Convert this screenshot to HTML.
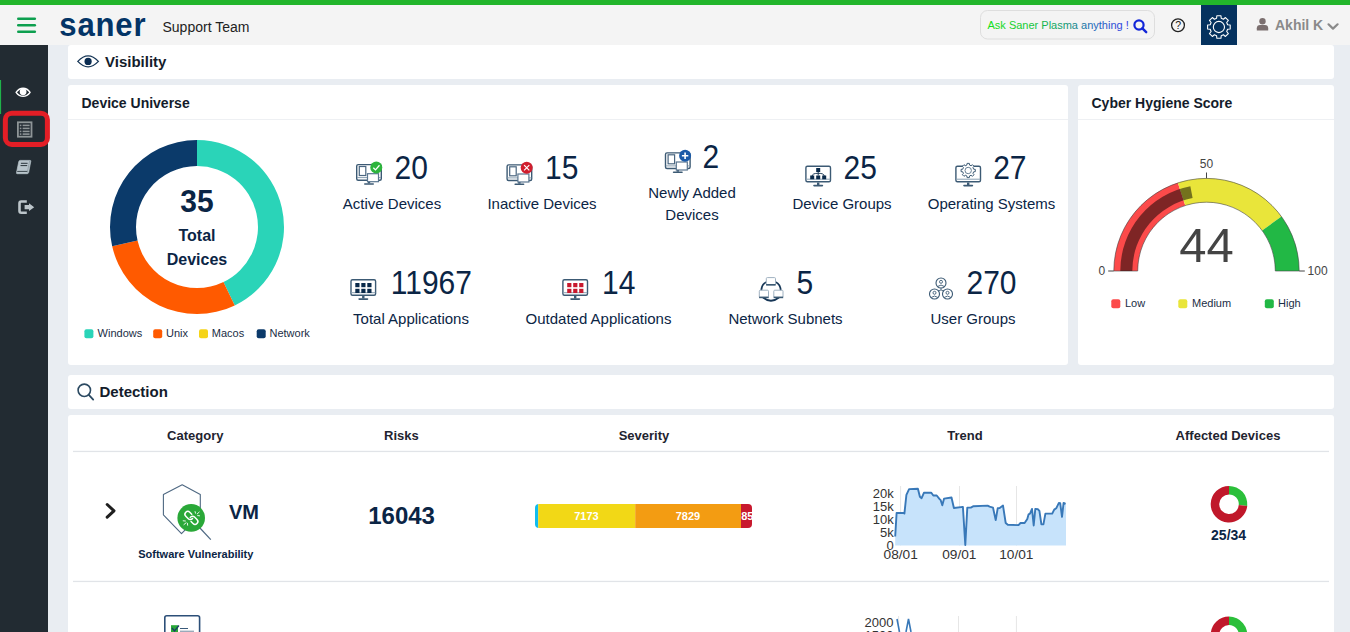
<!DOCTYPE html>
<html><head><meta charset="utf-8"><title>Saner Dashboard</title>
<style>html,body{margin:0;padding:0;width:1350px;height:632px;overflow:hidden;background:#e9edf2;font-family:"Liberation Sans",sans-serif}svg{display:block;position:absolute;left:0;top:0}</style>
</head><body>
<svg width="1350" height="632" viewBox="0 0 1350 632" font-family="'Liberation Sans', sans-serif"><rect x="0" y="0" width="1350" height="632" fill="#e9edf2"/>
<rect x="0" y="0" width="1350" height="5" fill="#22b52b"/>
<rect x="0" y="5" width="1350" height="40" fill="#f4f4f4"/>
<rect x="0" y="45" width="48" height="587" fill="#222b32"/>
<line x1="18.3" y1="18.7" x2="34.8" y2="18.7" stroke="#0d9f4f" stroke-width="2.6" stroke-linecap="round"/>
<line x1="18.3" y1="25.3" x2="34.8" y2="25.3" stroke="#0d9f4f" stroke-width="2.6" stroke-linecap="round"/>
<line x1="18.3" y1="31.8" x2="34.8" y2="31.8" stroke="#0d9f4f" stroke-width="2.6" stroke-linecap="round"/>
<text transform="translate(59.3,36) scale(0.915,1)" font-size="34" font-weight="bold" fill="#033466" letter-spacing="0.9">saner</text>
<text x="162.5" y="32.2" font-size="14" font-weight="normal" fill="#222" text-anchor="start" >Support Team</text>
<defs><linearGradient id="askg" x1="987" y1="0" x2="1128" y2="0" gradientUnits="userSpaceOnUse"><stop offset="0" stop-color="#14e01e"/><stop offset="0.3" stop-color="#12c83a"/><stop offset="0.55" stop-color="#139a70"/><stop offset="0.72" stop-color="#1a70b0"/><stop offset="1" stop-color="#2a3ee6"/></linearGradient></defs>
<rect x="980.5" y="10.5" width="174" height="28.5" rx="7" fill="#f4f4f4" stroke="#dedede" stroke-width="1"/>
<text x="987.5" y="29" font-size="11" font-weight="normal" fill="url(#askg)" text-anchor="start" >Ask Saner Plasma anything !</text>
<circle cx="1139" cy="25" r="4.6" fill="none" stroke="#1226d8" stroke-width="2.2"/>
<line x1="1142.4" y1="28.4" x2="1146.2" y2="32.2" stroke="#1226d8" stroke-width="2.4" stroke-linecap="round"/>
<circle cx="1178" cy="25.3" r="6.4" fill="none" stroke="#222" stroke-width="1.3"/>
<text x="1178.1" y="29.1" font-size="10.5" font-weight="normal" fill="#222" text-anchor="middle" >?</text>
<rect x="1201" y="5" width="36" height="40" fill="#05325f"/>
<path d="M1216.58,18.30 L1216.83,15.69 L1220.97,15.69 L1221.22,18.30 L1223.41,19.21 L1225.44,17.54 L1228.36,20.46 L1226.69,22.49 L1227.60,24.68 L1230.21,24.93 L1230.21,29.07 L1227.60,29.32 L1226.69,31.51 L1228.36,33.54 L1225.44,36.46 L1223.41,34.79 L1221.22,35.70 L1220.97,38.31 L1216.83,38.31 L1216.58,35.70 L1214.39,34.79 L1212.36,36.46 L1209.44,33.54 L1211.11,31.51 L1210.20,29.32 L1207.59,29.07 L1207.59,24.93 L1210.20,24.68 L1211.11,22.49 L1209.44,20.46 L1212.36,17.54 L1214.39,19.21Z" fill="none" stroke="#fff" stroke-width="1.1" stroke-linejoin="round"/>
<circle cx="1218.9" cy="27" r="5.6" fill="none" stroke="#fff" stroke-width="1.1"/>
<circle cx="1262.5" cy="21.3" r="3.2" fill="#7b6f6f"/>
<path d="M1256.8,30.4 L1256.8,28.2 Q1257,25 1260,25 L1265,25 Q1268,25 1268.2,28.2 L1268.2,30.4 Z" fill="#7b6f6f"/>
<text x="1275" y="30" font-size="14" font-weight="bold" fill="#8a8a8a" text-anchor="start" >Akhil K</text>
<polyline points="1328.5,24.3 1333,28.6 1337.6,24.3" fill="none" stroke="#8a8a8a" stroke-width="2.2" stroke-linecap="round" stroke-linejoin="round"/>
<rect x="0" y="80" width="1.1" height="34" fill="#1fb24a"/>
<path d="M16.1,92.3 Q19,88.2 23.1,88.2 Q27.2,88.2 30.1,92.3 Q27.2,96.3 23.1,96.3 Q19,96.3 16.1,92.3Z" fill="none" stroke="#fff" stroke-width="1.4" stroke-linejoin="round"/>
<circle cx="23.1" cy="91.7" r="3.4" fill="#fff"/>
<rect x="5.35" y="113.2" width="42.05" height="31.3" rx="6.5" fill="none" stroke="#e41e26" stroke-width="5"/>
<rect x="17.9" y="122.3" width="13.6" height="14.4" fill="none" stroke="#8e9597" stroke-width="1.8"/>
<rect x="19.8" y="124.6" width="1.6" height="1.6" fill="#8e9597"/><rect x="22.6" y="124.6" width="7" height="1.6" fill="#8e9597"/>
<rect x="19.8" y="127.60000000000001" width="1.6" height="1.6" fill="#8e9597"/><rect x="22.6" y="127.60000000000001" width="7" height="1.6" fill="#8e9597"/>
<rect x="19.8" y="130.60000000000002" width="1.6" height="1.6" fill="#8e9597"/><rect x="22.6" y="130.60000000000002" width="7" height="1.6" fill="#8e9597"/>
<rect x="19.8" y="133.3" width="1.6" height="1.6" fill="#8e9597"/><rect x="22.6" y="133.3" width="7" height="1.6" fill="#8e9597"/>
<path d="M20.2,160.4 L30.2,160.4 Q31,160.4 30.8,161.3 L28.6,172.6 Q28.3,173.7 27.2,173.7 L17.3,173.7 Q16.3,173.7 16.5,172.7 L18.8,161.6 Q19.1,160.4 20.2,160.4 Z" fill="#b9c5cc" stroke="#b9c5cc" stroke-width="0.7" stroke-linejoin="round"/>
<path d="M20.9,163.3 L27.6,163.3 M20.5,165.6 L27.2,165.6" stroke="#2a343b" stroke-width="1"/>
<path d="M17.2,171.4 L27.9,171.4" stroke="#2a343b" stroke-width="0.9"/>
<path d="M29.6,161 L27.3,172.5" stroke="#8d9aa2" stroke-width="0.8"/>
<path d="M26.8,201.5 L21.2,201.5 Q19.5,201.5 19.5,203.2 L19.5,211.1 Q19.5,212.8 21.2,212.8 L26.8,212.8" fill="none" stroke="#bcc5ca" stroke-width="2.6"/>
<path d="M24.6,205.1 L29,205.1 L29,203.2 L34.2,207.2 L29,211.1 L29,209.3 L24.6,209.3Z" fill="#bcc5ca"/>
<rect x="68" y="45" width="1266" height="34" rx="3" fill="#fff"/>
<rect x="68" y="85" width="1000" height="280" rx="3" fill="#fff"/>
<rect x="1078" y="85" width="256" height="280" rx="3" fill="#fff"/>
<rect x="68" y="375" width="1266" height="34" rx="3" fill="#fff"/>
<rect x="68" y="415" width="1266" height="240" rx="3" fill="#fff"/>
<rect x="68" y="119" width="1000" height="1" fill="#eef0f3"/>
<rect x="1078" y="119" width="256" height="1" fill="#eef0f3"/>
<path d="M77.8,61.4 Q88.1,50.5 98.4,61.4 Q88.1,72.3 77.8,61.4Z" fill="none" stroke="#163656" stroke-width="1.3"/>
<circle cx="88.1" cy="61.4" r="3.6" fill="#0b2d52"/>
<text x="105" y="67" font-size="15" font-weight="bold" fill="#141c2b" text-anchor="start" >Visibility</text>
<text x="81.5" y="107.6" font-size="14" font-weight="bold" fill="#141c2b" text-anchor="start" >Device Universe</text>
<text x="1091.5" y="108" font-size="14" font-weight="bold" fill="#141c2b" text-anchor="start" >Cyber Hygiene Score</text>
<path d="M197.00,140.00 A87,87 0 0 1 234.74,305.39 L223.46,281.96 A61,61 0 0 0 197.00,166.00 Z" fill="#2ad4b8"/>
<path d="M234.74,305.39 A87,87 0 0 1 112.18,246.36 L137.53,240.58 A61,61 0 0 0 223.46,281.96 Z" fill="#ff5a00"/>
<path d="M112.18,246.36 A87,87 0 0 1 197.00,140.00 L197.00,166.00 A61,61 0 0 0 137.53,240.58 Z" fill="#0b3a6a"/>
<text transform="translate(197,211.6) scale(1,1.035)" x="0" y="0" font-size="30" font-weight="bold" fill="#0b2545" text-anchor="middle" >35</text>
<text x="197" y="241" font-size="16" font-weight="bold" fill="#0b2545" text-anchor="middle" >Total</text>
<text x="197" y="264.6" font-size="16" font-weight="bold" fill="#0b2545" text-anchor="middle" >Devices</text>
<rect x="84.4" y="329.3" width="9" height="9" rx="2" fill="#2ad4b8"/>
<text x="97.6" y="336.8" font-size="11" font-weight="normal" fill="#1a2d45" text-anchor="start" >Windows</text>
<rect x="153.2" y="329.3" width="9" height="9" rx="2" fill="#ff5a00"/>
<text x="166" y="336.8" font-size="11" font-weight="normal" fill="#1a2d45" text-anchor="start" >Unix</text>
<rect x="199" y="329.3" width="9" height="9" rx="2" fill="#f5d418"/>
<text x="211.8" y="336.8" font-size="11" font-weight="normal" fill="#1a2d45" text-anchor="start" >Macos</text>
<rect x="256.7" y="329.3" width="9" height="9" rx="2" fill="#0b3a6a"/>
<text x="269.5" y="336.8" font-size="11" font-weight="normal" fill="#1a2d45" text-anchor="start" >Network</text>
<rect x="356.7" y="164.59999999999997" width="24.6" height="15.6" rx="1.5" fill="#fff" stroke="#3c5a74" stroke-width="1.4"/><line x1="357" y1="177.59999999999997" x2="381" y2="177.59999999999997" stroke="#8aa0b2" stroke-width="1"/><rect x="367.8" y="180.89999999999998" width="2.4" height="2.5" fill="#3c5a74"/><rect x="364.0" y="183.2" width="10" height="1.6" rx="0.8" fill="#3c5a74"/><rect x="359.3" y="166.5" width="6.5" height="9" fill="#fff" stroke="#4a6680" stroke-width="1.2"/><rect x="367.5" y="173.7" width="11" height="8" fill="#fff" stroke="#5a7690" stroke-width="1.2"/><circle cx="376.3" cy="167.5" r="6" fill="#2db43c"/><polyline points="373.3,167.7 375.5,169.9 379.5,165.3" fill="none" stroke="#fff" stroke-width="1.3"/>
<text transform="translate(394.5,178.8) scale(1,1.1)" x="0" y="0" font-size="30" font-weight="normal" fill="#0b2545" text-anchor="start" >20</text>
<text x="392" y="209.4" font-size="15" font-weight="normal" fill="#0b2545" text-anchor="middle" >Active Devices</text>
<rect x="507.09999999999997" y="164.89999999999998" width="24.6" height="15.6" rx="1.5" fill="#fff" stroke="#3c5a74" stroke-width="1.4"/><line x1="507.4" y1="177.89999999999998" x2="531.4" y2="177.89999999999998" stroke="#8aa0b2" stroke-width="1"/><rect x="518.1999999999999" y="181.2" width="2.4" height="2.5" fill="#3c5a74"/><rect x="514.4" y="183.5" width="10" height="1.6" rx="0.8" fill="#3c5a74"/><rect x="509.7" y="166.8" width="6.5" height="9" fill="#fff" stroke="#4a6680" stroke-width="1.2"/><rect x="517.9" y="174.0" width="11" height="8" fill="#fff" stroke="#5a7690" stroke-width="1.2"/><circle cx="526.6999999999999" cy="167.8" r="6" fill="#d01e2e"/><path d="M524.0999999999999,165.20000000000002 L529.3,170.4 M529.3,165.20000000000002 L524.0999999999999,170.4" stroke="#fff" stroke-width="1.2"/>
<text transform="translate(545,178.8) scale(1,1.1)" x="0" y="0" font-size="30" font-weight="normal" fill="#0b2545" text-anchor="start" >15</text>
<text x="542" y="209.4" font-size="15" font-weight="normal" fill="#0b2545" text-anchor="middle" >Inactive Devices</text>
<rect x="665.5" y="152.89999999999998" width="24.6" height="15.6" rx="1.5" fill="#fff" stroke="#3c5a74" stroke-width="1.4"/><line x1="665.8" y1="165.89999999999998" x2="689.8" y2="165.89999999999998" stroke="#8aa0b2" stroke-width="1"/><rect x="676.5999999999999" y="169.2" width="2.4" height="2.5" fill="#3c5a74"/><rect x="672.8" y="171.5" width="10" height="1.6" rx="0.8" fill="#3c5a74"/><rect x="668.0999999999999" y="154.8" width="6.5" height="9" fill="#fff" stroke="#4a6680" stroke-width="1.2"/><rect x="676.3" y="162.0" width="11" height="8" fill="#fff" stroke="#5a7690" stroke-width="1.2"/><circle cx="685.0999999999999" cy="155.8" r="6" fill="#1a5aa8"/><path d="M681.8999999999999,155.8 L688.3,155.8 M685.0999999999999,152.60000000000002 L685.0999999999999,159.0" stroke="#fff" stroke-width="1.6"/>
<text transform="translate(702.5,167.6) scale(1,1.1)" x="0" y="0" font-size="30" font-weight="normal" fill="#0b2545" text-anchor="start" >2</text>
<text x="692" y="197.6" font-size="15" font-weight="normal" fill="#0b2545" text-anchor="middle" >Newly Added</text>
<text x="692" y="219.8" font-size="15" font-weight="normal" fill="#0b2545" text-anchor="middle" >Devices</text>
<rect x="805.9000000000001" y="166.2" width="24.6" height="15.6" rx="1.5" fill="#fff" stroke="#3c5a74" stroke-width="1.4"/><line x1="806.2" y1="179.2" x2="830.2" y2="179.2" stroke="#8aa0b2" stroke-width="1"/><rect x="817.0" y="182.5" width="2.4" height="2.5" fill="#3c5a74"/><rect x="813.2" y="184.8" width="10" height="1.6" rx="0.8" fill="#3c5a74"/><rect x="816.2" y="168.0" width="4" height="4" fill="#0a2a4a"/><path d="M818.2,171.5 L818.2,175.5 M812.2,176.0 Q812.2,173.3 818.2,173.3 Q824.2,173.3 824.2,176.0" fill="none" stroke="#0a2a4a" stroke-width="0.9"/><rect x="810.2" y="175.5" width="4" height="3.8" fill="#0a2a4a"/><rect x="816.2" y="175.5" width="4" height="3.8" fill="#0a2a4a"/><rect x="822.2" y="175.5" width="4" height="3.8" fill="#0a2a4a"/>
<text transform="translate(843.5,178.8) scale(1,1.1)" x="0" y="0" font-size="30" font-weight="normal" fill="#0b2545" text-anchor="start" >25</text>
<text x="842" y="209.4" font-size="15" font-weight="normal" fill="#0b2545" text-anchor="middle" >Device Groups</text>
<rect x="955.9000000000001" y="166.2" width="24.6" height="15.6" rx="1.5" fill="#fff" stroke="#3c5a74" stroke-width="1.4"/><line x1="956.2" y1="179.2" x2="980.2" y2="179.2" stroke="#8aa0b2" stroke-width="1"/><rect x="967.0" y="182.5" width="2.4" height="2.5" fill="#3c5a74"/><rect x="963.2" y="184.8" width="10" height="1.6" rx="0.8" fill="#3c5a74"/><path d="M966.88,165.06 L967.07,163.39 L969.33,163.39 L969.52,165.06 L971.12,165.72 L972.43,164.68 L974.02,166.27 L972.98,167.58 L973.64,169.18 L975.31,169.37 L975.31,171.63 L973.64,171.82 L972.98,173.42 L974.02,174.73 L972.43,176.32 L971.12,175.28 L969.52,175.94 L969.33,177.61 L967.07,177.61 L966.88,175.94 L965.28,175.28 L963.97,176.32 L962.38,174.73 L963.42,173.42 L962.76,171.82 L961.09,171.63 L961.09,169.37 L962.76,169.18 L963.42,167.58 L962.38,166.27 L963.97,164.68 L965.28,165.72Z" fill="#fff" stroke="#3c5a74" stroke-width="1"/><circle cx="968.2" cy="170.5" r="3.2" fill="none" stroke="#6a8296" stroke-width="1"/>
<text transform="translate(993.2,178.8) scale(1,1.1)" x="0" y="0" font-size="30" font-weight="normal" fill="#0b2545" text-anchor="start" >27</text>
<text x="991.5" y="209.4" font-size="15" font-weight="normal" fill="#0b2545" text-anchor="middle" >Operating Systems</text>
<rect x="351.0" y="279.7" width="24.6" height="15.6" rx="1.5" fill="#fff" stroke="#3c5a74" stroke-width="1.4"/><line x1="351.3" y1="292.7" x2="375.3" y2="292.7" stroke="#8aa0b2" stroke-width="1"/><rect x="362.1" y="296" width="2.4" height="2.5" fill="#3c5a74"/><rect x="358.3" y="298.3" width="10" height="1.6" rx="0.8" fill="#3c5a74"/><rect x="355.3" y="283.0" width="4.2" height="4.2" fill="#0a2a4a"/><rect x="361.3" y="283.0" width="4.2" height="4.2" fill="#0a2a4a"/><rect x="367.3" y="283.0" width="4.2" height="4.2" fill="#0a2a4a"/><rect x="355.3" y="288.8" width="4.2" height="4.2" fill="#0a2a4a"/><rect x="361.3" y="288.8" width="4.2" height="4.2" fill="#0a2a4a"/><rect x="367.3" y="288.8" width="4.2" height="4.2" fill="#0a2a4a"/>
<text transform="translate(390.8,293.6) scale(1,1.1)" x="0" y="0" font-size="30" font-weight="normal" fill="#0b2545" text-anchor="start" >11967</text>
<text x="411" y="324.2" font-size="15" font-weight="normal" fill="#0b2545" text-anchor="middle" >Total Applications</text>
<rect x="562.9000000000001" y="279.7" width="24.6" height="15.6" rx="1.5" fill="#fff" stroke="#3c5a74" stroke-width="1.4"/><line x1="563.2" y1="292.7" x2="587.2" y2="292.7" stroke="#8aa0b2" stroke-width="1"/><rect x="574.0" y="296" width="2.4" height="2.5" fill="#3c5a74"/><rect x="570.2" y="298.3" width="10" height="1.6" rx="0.8" fill="#3c5a74"/><rect x="567.2" y="283.0" width="4.2" height="4.2" fill="#c8192e"/><rect x="573.2" y="283.0" width="4.2" height="4.2" fill="#c8192e"/><rect x="579.2" y="283.0" width="4.2" height="4.2" fill="#c8192e"/><rect x="567.2" y="288.8" width="4.2" height="4.2" fill="#c8192e"/><rect x="573.2" y="288.8" width="4.2" height="4.2" fill="#c8192e"/><rect x="579.2" y="288.8" width="4.2" height="4.2" fill="#c8192e"/>
<text transform="translate(602,293.6) scale(1,1.1)" x="0" y="0" font-size="30" font-weight="normal" fill="#0b2545" text-anchor="start" >14</text>
<text x="598.5" y="324.2" font-size="15" font-weight="normal" fill="#0b2545" text-anchor="middle" >Outdated Applications</text>
<path d="M766.5,282 Q761.5,284 761.2,291" fill="none" stroke="#163656" stroke-width="1.7"/><path d="M775.5,282 Q780.5,284 780.8,291" fill="none" stroke="#163656" stroke-width="1.7"/><path d="M763,297.5 Q771,304 779,297.5" fill="none" stroke="#163656" stroke-width="1.7"/><rect x="766.3" y="277.6" width="9.2" height="7.2" rx="1" fill="#fff" stroke="#9fb1c0" stroke-width="1"/><rect x="766.0999999999999" y="284.0" width="9.6" height="1.6" fill="#3c5a74"/><rect x="759.3" y="290.2" width="9.2" height="7.2" rx="1" fill="#fff" stroke="#9fb1c0" stroke-width="1"/><rect x="759.0999999999999" y="296.59999999999997" width="9.6" height="1.6" fill="#3c5a74"/><rect x="773.8" y="290.2" width="9.2" height="7.2" rx="1" fill="#fff" stroke="#9fb1c0" stroke-width="1"/><rect x="773.5999999999999" y="296.59999999999997" width="9.6" height="1.6" fill="#3c5a74"/>
<text transform="translate(796.5,293.6) scale(1,1.1)" x="0" y="0" font-size="30" font-weight="normal" fill="#0b2545" text-anchor="start" >5</text>
<text x="785.5" y="324.2" font-size="15" font-weight="normal" fill="#0b2545" text-anchor="middle" >Network Subnets</text>
<circle cx="941" cy="283.0" r="5" fill="#fff" stroke="#3c5a74" stroke-width="1.1"/><circle cx="941" cy="281.8" r="1.5" fill="none" stroke="#3c5a74" stroke-width="0.9"/><path d="M937.6,286.5 Q941,283.6 944.4,286.5" fill="none" stroke="#3c5a74" stroke-width="0.9"/><circle cx="934.5" cy="294.0" r="5" fill="#fff" stroke="#3c5a74" stroke-width="1.1"/><circle cx="934.5" cy="292.8" r="1.5" fill="none" stroke="#3c5a74" stroke-width="0.9"/><path d="M931.1,297.5 Q934.5,294.6 937.9,297.5" fill="none" stroke="#3c5a74" stroke-width="0.9"/><circle cx="947.5" cy="294.0" r="5" fill="#fff" stroke="#3c5a74" stroke-width="1.1"/><circle cx="947.5" cy="292.8" r="1.5" fill="none" stroke="#3c5a74" stroke-width="0.9"/><path d="M944.1,297.5 Q947.5,294.6 950.9,297.5" fill="none" stroke="#3c5a74" stroke-width="0.9"/><path d="M941,288.0 L941,290.0 L938,291.0 M941,290.0 L944,291.0" stroke="#3c5a74" stroke-width="0.8" fill="none"/>
<text transform="translate(966.5,293.6) scale(1,1.1)" x="0" y="0" font-size="30" font-weight="normal" fill="#0b2545" text-anchor="start" >270</text>
<text x="973" y="324.2" font-size="15" font-weight="normal" fill="#0b2545" text-anchor="middle" >User Groups</text>
<path d="M1113.80,271.00 A92.7,92.7 0 0 1 1177.85,182.84 L1185.24,205.57 A68.8,68.8 0 0 0 1137.70,271.00 Z" fill="#fc4a4a"/>
<path d="M1177.85,182.84 A92.7,92.7 0 0 1 1281.50,216.51 L1262.16,230.56 A68.8,68.8 0 0 0 1185.24,205.57 Z" fill="#e9e53a"/>
<path d="M1281.50,216.51 A92.7,92.7 0 0 1 1299.20,271.00 L1275.30,271.00 A68.8,68.8 0 0 0 1262.16,230.56 Z" fill="#22b845"/>
<path d="M1113.80,271.00 A92.7,92.7 0 0 1 1299.20,271.00 L1275.30,271.00 A68.8,68.8 0 0 0 1137.70,271.00 Z" fill="none" stroke="#444" stroke-width="0.6"/>
<path d="M1120.30,271.00 A86.2,86.2 0 0 1 1190.35,186.33 L1192.60,198.11 A74.2,74.2 0 0 0 1132.30,271.00 Z" fill="rgba(0,0,0,0.5)"/>
<line x1="1206.5" y1="172.5" x2="1206.5" y2="178.3" stroke="#444" stroke-width="1"/>
<line x1="1108.2" y1="271" x2="1113.8" y2="271" stroke="#444" stroke-width="1"/>
<line x1="1299.2" y1="271" x2="1304.8" y2="271" stroke="#444" stroke-width="1"/>
<text x="1206.5" y="168.3" font-size="12" font-weight="normal" fill="#444" text-anchor="middle" >50</text>
<text x="1105.3" y="275" font-size="12" font-weight="normal" fill="#444" text-anchor="end" >0</text>
<text x="1307.6" y="275" font-size="12" font-weight="normal" fill="#444" text-anchor="start" >100</text>
<text x="1206.5" y="262.2" font-size="49" font-weight="normal" fill="#444" text-anchor="middle" >44</text>
<rect x="1111.3" y="299.2" width="9" height="9" rx="2" fill="#fc4a4a"/>
<text x="1125" y="307" font-size="11" font-weight="normal" fill="#1a2d45" text-anchor="start" >Low</text>
<rect x="1178.3" y="299.2" width="9" height="9" rx="2" fill="#e9e53a"/>
<text x="1192" y="307" font-size="11" font-weight="normal" fill="#1a2d45" text-anchor="start" >Medium</text>
<rect x="1264.8" y="299.2" width="9" height="9" rx="2" fill="#22b845"/>
<text x="1278" y="307" font-size="11" font-weight="normal" fill="#1a2d45" text-anchor="start" >High</text>
<circle cx="84.3" cy="390.3" r="6.2" fill="none" stroke="#2c4a62" stroke-width="1.6"/>
<line x1="88.8" y1="394.8" x2="93.2" y2="399.6" stroke="#2c4a62" stroke-width="1.8" stroke-linecap="round"/>
<text x="99.5" y="396.5" font-size="15" font-weight="bold" fill="#141c2b" text-anchor="start" >Detection</text>
<text x="195.3" y="439.8" font-size="13" font-weight="bold" fill="#1f2430" text-anchor="middle" >Category</text>
<text x="401.4" y="439.8" font-size="13" font-weight="bold" fill="#1f2430" text-anchor="middle" >Risks</text>
<text x="644" y="439.8" font-size="13" font-weight="bold" fill="#1f2430" text-anchor="middle" >Severity</text>
<text x="965" y="439.8" font-size="13" font-weight="bold" fill="#1f2430" text-anchor="middle" >Trend</text>
<text x="1228" y="439.8" font-size="13" font-weight="bold" fill="#1f2430" text-anchor="middle" >Affected Devices</text>
<rect x="73" y="450.8" width="1256" height="1.3" fill="#e1e4e8"/>
<rect x="73" y="580.8" width="1256" height="1.3" fill="#e1e4e8"/>
<polyline points="107.2,504.5 114,510.8 107.2,517.2" fill="none" stroke="#1f1f1f" stroke-width="3" stroke-linecap="round" stroke-linejoin="round"/>
<path d="M182.2,484.8 L200.3,494.5 L200.3,514.5 L181.5,533.6 L163.4,514.8 L163.4,494.5 Z" fill="none" stroke="#4e6882" stroke-width="1.1" stroke-linejoin="round"/>
<line x1="199" y1="527" x2="210.8" y2="539.7" stroke="#4e6882" stroke-width="1.2"/>
<circle cx="191.2" cy="517.9" r="13.8" fill="#2aa838"/>
<g transform="translate(191.4,517.9) rotate(-45)" fill="none" stroke="#fff" stroke-width="1.5" stroke-linecap="round"><path d="M2.8,-2.3 L2.8,-5.1 A2.8,2.8 0 0 0 -2.8,-5.1 L-2.8,-1.6 A2.8,2.8 0 0 0 0.4,1.2"/><path d="M-2.8,2.3 L-2.8,5.1 A2.8,2.8 0 0 0 2.8,5.1 L2.8,1.6 A2.8,2.8 0 0 0 -0.4,-1.2"/></g>
<path d="M195.1,511.6 L195.5,513.2 M197.2,513.9 L199.2,512.1 M197.7,515.6 L199.6,515.8 M183.2,520.8 L185.4,521 M183.9,524.6 L186.1,522.8 M187.4,523.3 L187.6,525.2" stroke="#fff" stroke-width="0.9" stroke-linecap="round"/>
<text x="229" y="518.9" font-size="20" font-weight="bold" fill="#0b2545" text-anchor="start" >VM</text>
<text x="195.8" y="557.7" font-size="11" font-weight="bold" fill="#0b2545" text-anchor="middle" >Software Vulnerability</text>
<text x="401.6" y="524.3" font-size="24" font-weight="bold" fill="#0b2545" text-anchor="middle" >16043</text>
<defs><clipPath id="sevclip"><rect x="535" y="504" width="217" height="24" rx="4"/></clipPath></defs>
<g clip-path="url(#sevclip)"><rect x="535" y="504" width="3.2" height="24" fill="#12bcef"/><rect x="538.2" y="504" width="97" height="24" fill="#f2d816"/><rect x="635.2" y="504" width="105.8" height="24" fill="#f39c12"/><rect x="741" y="504" width="11" height="24" fill="#c8192e"/><text x="741.2" y="520" font-size="11" font-weight="bold" fill="#fff">855</text></g>
<text x="586.5" y="520" font-size="11" font-weight="bold" fill="#fff" text-anchor="middle" >7173</text>
<text x="688" y="520" font-size="11" font-weight="bold" fill="#fff" text-anchor="middle" >7829</text>
<line x1="900.6" y1="486" x2="900.6" y2="545.5" stroke="#e6e6e6" stroke-width="1"/>
<line x1="959.5" y1="486" x2="959.5" y2="545.5" stroke="#e6e6e6" stroke-width="1"/>
<line x1="1016.5" y1="486" x2="1016.5" y2="545.5" stroke="#e6e6e6" stroke-width="1"/>
<polygon points="895.2,545.6 895.2,536.5 896.6,513 903.7,513 904.4,513.6 906.4,494.8 909.1,489.1 917.9,488.7 919.9,496.8 921.6,498.2 923.9,492.8 931.3,492.8 933.3,495.5 936.7,495.5 939.4,498.8 940.7,500.2 942.3,505.3 944.1,498.6 951.5,497.5 953.9,508 962.9,506.9 965.3,545.0 967.3,507.6 970.8,507.6 973.5,506.2 987.6,505.6 989.6,506.6 993,507.6 995.7,520.1 997.7,508.3 999.7,508 1003,505.6 1005.7,523 1007.8,524.7 1018.5,525.1 1020.5,523 1024.6,523 1027.3,519 1028.6,514.3 1030,513.6 1032,508.9 1033.7,525.5 1035.3,508.9 1038,509.3 1039.4,510.9 1041.4,524.4 1043.4,524.4 1045.4,513.6 1052.2,513.6 1054.2,509.6 1056.2,508.3 1058.9,502.9 1060.2,503.1 1062,516.9 1063.6,502.9 1065.6,503.9 1066,503.9 1066,545.6" fill="#c7e3fb"/>
<polyline points="895.2,536.5 896.6,513 903.7,513 904.4,513.6 906.4,494.8 909.1,489.1 917.9,488.7 919.9,496.8 921.6,498.2 923.9,492.8 931.3,492.8 933.3,495.5 936.7,495.5 939.4,498.8 940.7,500.2 942.3,505.3 944.1,498.6 951.5,497.5 953.9,508 962.9,506.9 965.3,545.0 967.3,507.6 970.8,507.6 973.5,506.2 987.6,505.6 989.6,506.6 993,507.6 995.7,520.1 997.7,508.3 999.7,508 1003,505.6 1005.7,523 1007.8,524.7 1018.5,525.1 1020.5,523 1024.6,523 1027.3,519 1028.6,514.3 1030,513.6 1032,508.9 1033.7,525.5 1035.3,508.9 1038,509.3 1039.4,510.9 1041.4,524.4 1043.4,524.4 1045.4,513.6 1052.2,513.6 1054.2,509.6 1056.2,508.3 1058.9,502.9 1060.2,503.1 1062,516.9 1063.6,502.9 1065.6,503.9" fill="none" stroke="#3878b8" stroke-width="1.9" stroke-linejoin="round"/>
<text x="893.8" y="498.2" font-size="13" font-weight="normal" fill="#333" text-anchor="end" >20k</text>
<text x="893.8" y="511.2" font-size="13" font-weight="normal" fill="#333" text-anchor="end" >15k</text>
<text x="893.8" y="524.2" font-size="13" font-weight="normal" fill="#333" text-anchor="end" >10k</text>
<text x="893.8" y="537" font-size="13" font-weight="normal" fill="#333" text-anchor="end" >5k</text>
<text x="893.8" y="550" font-size="13" font-weight="normal" fill="#333" text-anchor="end" >0</text>
<text x="900.7" y="558.8" font-size="13.7" font-weight="normal" fill="#333" text-anchor="middle" >08/01</text>
<text x="959.3" y="558.8" font-size="13.7" font-weight="normal" fill="#333" text-anchor="middle" >09/01</text>
<text x="1016.3" y="558.8" font-size="13.7" font-weight="normal" fill="#333" text-anchor="middle" >10/01</text>
<path d="M1229.00,485.90 A18.3,18.3 0 0 1 1247.22,505.89 L1238.76,505.11 A9.8,9.8 0 0 0 1229.00,494.40 Z" fill="#2bbf3a"/>
<path d="M1247.22,505.89 A18.3,18.3 0 1 1 1229.00,485.90 L1229.00,494.40 A9.8,9.8 0 1 0 1238.76,505.11 Z" fill="#c0182a"/>
<text x="1228.6" y="540.2" font-size="14" font-weight="bold" fill="#0b2545" text-anchor="middle" >25/34</text>
<rect x="164.8" y="615.8" width="34.8" height="30" rx="2" fill="#fff" stroke="#2c4f78" stroke-width="1.6"/>
<rect x="171" y="625.2" width="7" height="8" fill="#2aa838"/>
<polyline points="172,628 174.5,631 179,625.5" fill="none" stroke="#1a3a6a" stroke-width="1.2"/>
<rect x="180" y="628" width="8" height="1" fill="#3a5a7a"/><rect x="180" y="630.6" width="14" height="1.4" fill="#9aaaba"/>
<line x1="898.6" y1="616" x2="898.6" y2="632" stroke="#e6e6e6" stroke-width="1"/>
<line x1="958.5" y1="616" x2="958.5" y2="632" stroke="#e6e6e6" stroke-width="1"/>
<line x1="1016.4" y1="616" x2="1016.4" y2="632" stroke="#e6e6e6" stroke-width="1"/>
<rect x="895" y="620" width="171" height="12" fill="#c7e3fb" opacity="0"/>
<polyline points="896,617 899,632 M0,0" fill="none"/>
<path d="M897,619 L899.5,632 M906,632 L908.5,619 L911,632" fill="none" stroke="#3878b8" stroke-width="1.6"/>
<text x="893.5" y="627.2" font-size="13" font-weight="normal" fill="#333" text-anchor="end" >2000</text>
<text x="893.5" y="640.1" font-size="13" font-weight="normal" fill="#333" text-anchor="end" >1500</text>
<path d="M1229.00,616.60 A18.3,18.3 0 0 1 1247.02,638.08 L1238.65,636.60 A9.8,9.8 0 0 0 1229.00,625.10 Z" fill="#2bbf3a"/>
<path d="M1247.02,638.08 A18.3,18.3 0 1 1 1229.00,616.60 L1229.00,625.10 A9.8,9.8 0 1 0 1238.65,636.60 Z" fill="#c0182a"/></svg>
</body></html>
